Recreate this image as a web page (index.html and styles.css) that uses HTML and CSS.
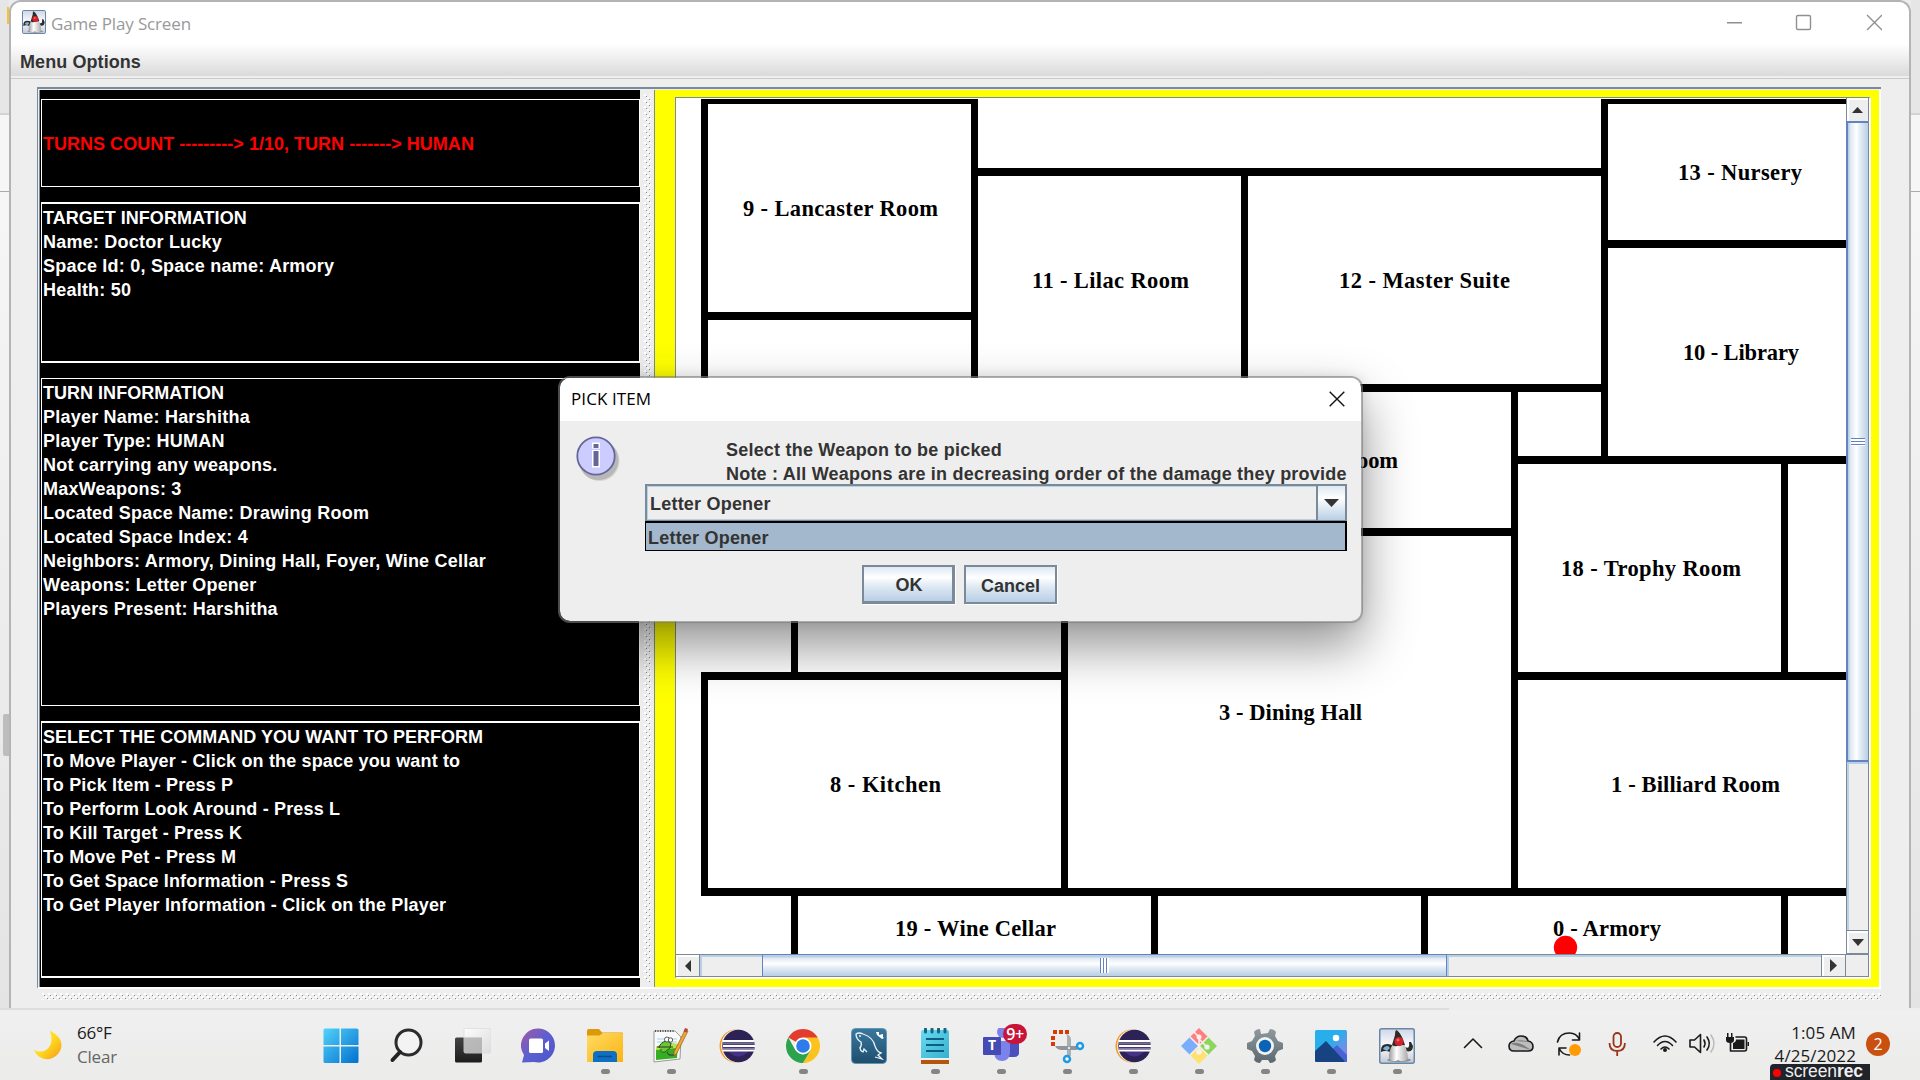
FILE: index.html
```html
<!DOCTYPE html>
<html lang="en">
<head>
<meta charset="utf-8">
<title>Game Play Screen</title>
<link rel="stylesheet" href="styles.css">
</head>
<body>
<svg class="defs" width="0" height="0" aria-hidden="true">
  <defs>
    <linearGradient id="gWin" x1="0" y1="0" x2="1" y2="1"><stop offset="0" stop-color="#52d2fb"/><stop offset="1" stop-color="#0270cd"/></linearGradient>
    <linearGradient id="gDark" x1="0" y1="0" x2="0" y2="1"><stop offset="0" stop-color="#444"/><stop offset="1" stop-color="#1c1c1c"/></linearGradient>
    <linearGradient id="gGlass" x1="0" y1="0" x2="1" y2="1"><stop offset="0" stop-color="#fff" stop-opacity=".95"/><stop offset="1" stop-color="#d8d8d8" stop-opacity=".75"/></linearGradient>
    <linearGradient id="gChat" x1="0" y1="0" x2="1" y2="1"><stop offset="0" stop-color="#a558a5"/><stop offset=".5" stop-color="#5c5fd0"/><stop offset="1" stop-color="#4a55c8"/></linearGradient>
    <linearGradient id="gFolder" x1="0" y1="0" x2="1" y2="1"><stop offset="0" stop-color="#ffdb66"/><stop offset="1" stop-color="#fbb410"/></linearGradient>
    <linearGradient id="gSea" x1="0" y1="0" x2="0" y2="1"><stop offset="0" stop-color="#39789f"/><stop offset="1" stop-color="#1f4d6c"/></linearGradient>
    <linearGradient id="gNote" x1="0" y1="0" x2="1" y2="1"><stop offset="0" stop-color="#6bdcf0"/><stop offset="1" stop-color="#37afd0"/></linearGradient>
    <linearGradient id="gGear" x1="0" y1="0" x2="0" y2="1"><stop offset="0" stop-color="#8f999f"/><stop offset="1" stop-color="#5c6870"/></linearGradient>
    <linearGradient id="gPhoto" x1="0" y1="0" x2="1" y2="1"><stop offset=".4" stop-color="#28aeea"/><stop offset="1" stop-color="#a37be0"/></linearGradient>
    <linearGradient id="gMoon" x1="0" y1="0" x2="1" y2="1"><stop offset="0" stop-color="#ffe84a"/><stop offset=".5" stop-color="#ffd91f"/><stop offset="1" stop-color="#f79a14"/></linearGradient>
    <linearGradient id="gFrame" x1="0" y1="0" x2="0" y2="1"><stop offset="0" stop-color="#cfd6e6"/><stop offset=".5" stop-color="#fbfcff"/><stop offset="1" stop-color="#c3c8d4"/></linearGradient>
    <linearGradient id="gBody" x1="0" y1="0" x2="1" y2="0"><stop offset="0" stop-color="#999"/><stop offset=".4" stop-color="#fff"/><stop offset="1" stop-color="#aaa"/></linearGradient>
    <symbol id="duke" viewBox="0 0 36 36">
      <rect x=".75" y=".75" width="34.5" height="34.5" rx="2" fill="url(#gFrame)" stroke="#6787a5" stroke-width="1.5"/>
      <ellipse cx="20" cy="32" rx="12" ry="2" fill="#8b8f9b"/>
      <path d="M2 22q0-6 6-6 5 0 7 3l-4 5q-5-2-9 0z" fill="#2c2c2c"/>
      <path d="M4 21q1-3 5-3l2 2-3 3z" fill="#7db2dc"/>
      <path d="M26 19q5 3 4-5h2l2 4q0 7-7 5z" fill="#2c2c2c"/>
      <path d="M14 16q-5 8-4 15 4 4 9 1 5 3 10-1 0-8-4-15z" fill="url(#gBody)"/>
      <path d="M17 2q-1 1-1 5l-3 10q3 2 5 1l6-1 2 0-3-8q-3-6-6-7z" fill="#2b2b2b"/>
      <circle cx="20" cy="13.500" r="4.500" fill="#d3202a"/><circle cx="19" cy="12" r="1.500" fill="#f46b62"/>
    </symbol>
    <symbol id="eclipse" viewBox="0 0 36 36">
      <circle cx="17" cy="18" r="16.500" fill="#f7981d"/><circle cx="18.500" cy="18" r="16.500" fill="#f4ede6"/>
      <circle cx="19.500" cy="18" r="16.200" fill="#2c2255"/>
      <path d="M9 23q10 11 21 0z" fill="#453185"/>
      <path d="M4 13.200h31M4 18h32M4 22.500h31" stroke="#fff" stroke-width="2.200"/>
      <path d="M4 15.800h32M4 20.300h32" stroke="#9b90bd" stroke-width="1"/>
    </symbol>
  </defs>
</svg>

<div class="desktop">
  <div class="strip strip-left"><i class="peek-folder"></i><i class="peek-thumb"></i></div>
  <main class="window">
    <header class="titlebar">
      <svg class="app-icon"><use href="#duke"/></svg>
      <span class="title">Game Play Screen</span>
      <svg class="controls" viewBox="0 0 160 42"><g fill="none" stroke="#8f8f8f" stroke-width="1.400"><path d="M5 20.700h15"/><rect x="74.500" y="13.500" width="14" height="14" rx="1.500"/><path d="M145 13l15 15M160 13l-15 15"/></g></svg>
    </header>
    <nav class="menubar"><span>Menu Options</span></nav>
    <div class="content">
      <div class="split">
        <section class="info">
          <div class="box turns"><p class="caps">TURNS COUNT ---------&gt; 1/10, TURN -------&gt; HUMAN</p></div>
          <div class="box target"><p class="caps">TARGET INFORMATION</p><p>Name: Doctor Lucky</p><p>Space Id: 0, Space name: Armory</p><p>Health: 50</p></div>
          <div class="box player"><p class="caps">TURN INFORMATION</p><p>Player Name: Harshitha</p><p>Player Type: HUMAN</p><p>Not carrying any weapons.</p><p>MaxWeapons: 3</p><p>Located Space Name: Drawing Room</p><p>Located Space Index: 4</p><p>Neighbors: Armory, Dining Hall, Foyer, Wine Cellar</p><p>Weapons: Letter Opener</p><p>Players Present: Harshitha</p></div>
          <div class="box commands"><p class="caps">SELECT THE COMMAND YOU WANT TO PERFORM</p><p>To Move Player - Click on the space you want to</p><p>To Pick Item - Press P</p><p>To Perform Look Around - Press L</p><p>To Kill Target - Press K</p><p>To Move Pet - Press M</p><p>To Get Space Information - Press S</p><p>To Get Player Information - Click on the Player</p></div>
        </section>
        <div class="divider"></div>
        <section class="board">
          <div class="scrollpane">
            <svg class="map" viewBox="677 99 1169 855">
              <rect x="677" y="99" width="1169" height="855" fill="#fff"/>
              <g fill="#000">
                <rect x="701" y="99" width="277" height="5"/><rect x="701" y="99" width="7" height="430"/><rect x="971" y="99" width="7" height="430"/>
                <rect x="701" y="312" width="277" height="8"/><rect x="971" y="168" width="637" height="8"/>
                <rect x="1241" y="168" width="7" height="224"/><rect x="1601" y="99" width="7" height="365"/>
                <rect x="1601" y="99" width="245" height="5"/><rect x="1601" y="240" width="245" height="8"/>
                <rect x="971" y="384" width="637" height="8"/><rect x="1511" y="384" width="7" height="512"/>
                <rect x="1511" y="456" width="335" height="8"/><rect x="1061" y="528" width="457" height="8"/>
                <rect x="1511" y="672" width="335" height="8"/><rect x="1781" y="456" width="7" height="224"/>
                <rect x="791" y="528" width="7" height="152"/><rect x="1061" y="528" width="7" height="368"/>
                <rect x="701" y="672" width="367" height="8"/><rect x="701" y="672" width="7" height="224"/>
                <rect x="701" y="888" width="1145" height="8"/>
                <rect x="791" y="888" width="7" height="66"/><rect x="1151" y="888" width="7" height="66"/><rect x="1421" y="888" width="7" height="66"/><rect x="1781" y="888" width="7" height="66"/>
              </g>
              <g class="rooms">
                <text x="743" y="216" textLength="195">9 - Lancaster Room</text>
                <text x="1032" y="288" textLength="157">11 - Lilac Room</text>
                <text x="1339" y="288" textLength="171">12 - Master Suite</text>
                <text x="1678" y="180" textLength="124">13 - Nursery</text>
                <text x="1683" y="360" textLength="116">10 - Library</text>
                <text x="1341" y="468" textLength="57">Room</text>
                <text x="1561" y="576" textLength="180">18 - Trophy Room</text>
                <text x="1219" y="720" textLength="143">3 - Dining Hall</text>
                <text x="830" y="792" textLength="111">8 - Kitchen</text>
                <text x="1611" y="792" textLength="169">1 - Billiard Room</text>
                <text x="895" y="936" textLength="161">19 - Wine Cellar</text>
                <text x="1553" y="936" textLength="108">0 - Armory</text>
              </g>
              <circle cx="1565.500" cy="947.500" r="11.700" fill="#f00"/>
            </svg>
            <div class="vbar">
              <span class="arrow up"><svg width="11" height="6"><path d="M0 6L5.500 0 11 6z" fill="#333"/></svg></span>
              <div class="vthumb"><i></i></div>
              <div class="vtrack"></div>
              <span class="arrow down"><svg width="12" height="7"><path d="M0 0h12L6 7z" fill="#333"/></svg></span>
            </div>
            <div class="hbar">
              <span class="arrow left"><svg width="6" height="12"><path d="M6 0v12L0 6z" fill="#333"/></svg></span>
              <div class="htrack before"></div>
              <div class="hthumb"><i></i></div>
              <div class="htrack after"></div>
              <span class="arrow right"><svg width="7" height="13"><path d="M0 0v13L7 6.500z" fill="#333"/></svg></span>
            </div>
            <div class="corner"></div>
          </div>
        </section>
      </div>
      <div class="hdivider"></div>
    </div>
  </main>
  <div class="strip strip-right"></div>
</div>

<section class="dialog">
  <header class="dialog-title"><span>PICK ITEM</span><svg width="16" height="16" viewBox="0 0 16 16"><path d="M.7.700l14.600 14.600M15.300.700L.7 15.300" stroke="#111" stroke-width="1.400"/></svg></header>
  <div class="dialog-body">
    <svg class="info-icon" viewBox="0 0 48 48"><circle cx="23.500" cy="25" r="20" fill="#000" opacity=".1"/><circle cx="22.500" cy="24" r="20" fill="#000" opacity=".14"/><circle cx="20" cy="20" r="18.700" fill="#ccccff" stroke="#666699" stroke-width="1.800"/><path d="M16 6.500h8v6h-8zM16 14h8v17.500h-8z" fill="#fff"/><path d="M17.500 8h5v4h-5zM17.500 15h5v15h-5z" fill="#666699"/></svg>
    <div class="form">
      <div class="message"><p class="m1">Select the Weapon to be picked</p><p class="m2">Note : All Weapons are in decreasing order of the damage they provide</p></div>
      <div class="combo"><span>Letter Opener</span><b><svg width="15" height="8"><path d="M0 0h15L7.500 8z" fill="#333"/></svg></b></div>
      <div class="option">Letter Opener</div>
    </div>
  </div>
  <div class="buttons"><button class="ok">OK</button><button>Cancel</button></div>
</section>

<footer class="taskbar">
  <div class="weather">
    <svg width="30" height="32" viewBox="0 0 30 32"><path d="M17 1C29 6 32 17 24 25C17 32 5 30 1 20C9 24 16 20 18 13C19 8 18 4 17 1z" fill="url(#gMoon)"/></svg>
    <div><p>66°F</p><p class="dim">Clear</p></div>
  </div>
  <div class="apps">
    <span class="app"><svg viewBox="0 0 36 36"><path d="M.5 2Q.5.500 2 .5h14.500v16.500H.5zM18 .5h15.500Q35.500.500 35.500 2v15H18zM.5 18.500h16v16.500H2q-1.500 0-1.500-1.500zM18 18.500h17.500v15q0 1.500-1.500 1.500H18z" fill="url(#gWin)"/></svg></span>
    <span class="app"><svg viewBox="0 0 36 36"><circle cx="19.500" cy="14.500" r="12.500" fill="#f3f3f3" stroke="#2c2c2c" stroke-width="3"/><path d="M11 24L3.500 32" stroke="#222" stroke-width="4" stroke-linecap="round"/></svg></span>
    <span class="app"><svg viewBox="0 0 36 36"><rect y="9.500" width="27" height="25" rx="1.500" fill="url(#gDark)"/><rect x="9" y=".5" width="27" height="24.500" rx="1.500" fill="url(#gGlass)" stroke="#ddd" stroke-width=".8"/><path d="M9 9.500h18v15.500H9z" fill="#b4b4b4" opacity=".85"/></svg></span>
    <span class="app"><svg viewBox="0 0 36 36"><path d="M18 .5A17 17 0 1 1 13 34L1 34.500 3 27A17 17 0 0 1 18 .5z" fill="url(#gChat)"/><rect x="8" y="10.500" width="14" height="14.500" rx="1.500" fill="#fff"/><path d="M24 15.500l4-3v10.500l-4-3z" fill="#fff"/></svg></span>
    <span class="app run"><svg viewBox="0 0 36 36"><path d="M0 3Q0 1 2 1h10l3 3.500h19.500q1.500 0 1.500 1V12H0z" fill="#dc9a09"/><path d="M0 7.500h12.500L16 5h18.500Q36 5 36 6.500V34H0z" fill="url(#gFolder)"/><path d="M6 34V27q0-4 4-4h16q4 0 4 4v7z" fill="#0f6fc2"/><path d="M10.500 28.500h14.500" stroke="#074d8c" stroke-width="1.500"/></svg></span>
    <span class="app run"><svg viewBox="0 0 36 36"><path d="M1 3l21 0 6 6-1 22-26 3z" fill="#fafafa" stroke="#9a9a9a"/><path d="M2 3h20" stroke="#555" stroke-width="2" stroke-dasharray="1 1.500"/><path d="M4 11h20M4 14h20" stroke="#a8cfe8"/><path d="M3 19q10-5 22-3l-1 14-21 2z" fill="#37ad26"/><path d="M3 19q10-4 22-3l-1 4-21 2z" fill="#bde348"/><path d="M6 20q1-6 8-7l4 2-1 5-5 4q-5 1-4-3" fill="#6cc832" stroke="#225d19"/><circle cx="14" cy="11.500" r="2.500" fill="#fff" stroke="#333" stroke-width=".8"/><circle cx="17.500" cy="12" r="2.200" fill="#fff" stroke="#333" stroke-width=".8"/><path d="M4 19h16M14 24l2 3h5" stroke="#333" fill="none"/><path d="M32 2l3 1-11 22-3 3 0-4z" fill="#f1a82f" stroke="#8a5d1e" stroke-width=".7"/><path d="M32 0l3 1-1.500 3.500-3-1z" fill="#b7463f"/></svg></span>
    <span class="app"><svg><use href="#eclipse"/></svg></span>
    <span class="app run"><svg viewBox="0 0 36 36"><path d="M18 18L3.300 9.500A17 17 0 0 1 32.700 9.500z" fill="#e33b2e"/><path d="M18 9.500h14.700A17 17 0 0 1 18 35l7.400-12.500z" fill="#fcc31e"/><path d="M3.300 9.500A17 17 0 0 0 18 35l7.400-12.500-7.400 4-7.400-4z" fill="#2ba24c"/><circle cx="18" cy="18" r="8.500" fill="#fff"/><circle cx="18" cy="18" r="6.800" fill="#2f7bea"/></svg></span>
    <span class="app"><svg viewBox="0 0 36 36"><rect x=".5" y=".5" width="35" height="35" rx="4" fill="url(#gSea)" stroke="#6495b3"/><g fill="none" stroke="#e9f3f8" stroke-width="1.300"><path d="M9 20q2-2 1-6Q5 11 5 6q3-2 7 0q10 3 12 12q2 6 6 7l-3 2 4 4-7-2"/><path d="M9 19q0 4 3 5l1-3 3 3"/></g><path d="M25 4l3 0 0 3 4-1 0 3 1 1-2 1-5-4z" fill="#fff"/><circle cx="9" cy="8" r=".9" fill="#fff"/></svg></span>
    <span class="app run"><svg viewBox="0 0 36 36"><path d="M4 31h28v5H4z" fill="#b3560f"/><path d="M4 29h28v3H4z" fill="#f1f1ef"/><path d="M4 4q0-2 2-2h24q2 0 2 2v26H4z" fill="url(#gNote)"/><path d="M8.500 1v3M15 1v3M21.500 1v3M28 1v3" stroke="#146784" stroke-width="3" stroke-linecap="round"/><path d="M9 11h18M9 17h18M9 23h18" stroke="#0c5f83" stroke-width="1.800"/></svg></span>
    <span class="app run teams"><svg viewBox="0 0 36 36"><path d="M26 12h10v14q-1 3-5 3h-5z" fill="#4b50bd"/><circle cx="20" cy="4" r="6" fill="#7b83eb"/><path d="M11 13h16v12q-1 8-8 8t-8-8z" fill="#7b83eb"/><rect x="0" y="9" width="18" height="18" rx="1" fill="#444cb4"/></svg><em>T</em><b>9+</b></span>
    <span class="app run"><svg viewBox="0 0 36 36"><path d="M4 4h4M10 4h4M16 4h4M4 8v4M4 14v4" stroke="#d83b01" stroke-width="4"/><path d="M17 6q5 1 5 6v16h-4V8z" fill="#a9b0b4"/><path d="M6 18h22v4H13q-5 0-7-4z" fill="#8e969b"/><circle cx="20" cy="20" r="1.200" fill="#e8eaeb"/><circle cx="31" cy="18" r="3" fill="#fff" stroke="#1c9be2" stroke-width="2.500"/><circle cx="18" cy="31" r="3" fill="#fff" stroke="#1c9be2" stroke-width="2.500"/></svg></span>
    <span class="app run"><svg><use href="#eclipse"/></svg></span>
    <span class="app run"><svg viewBox="0 0 36 36"><path d="M18 0l9 9-9 9-9-9z" fill="#ff7f7f"/><path d="M27 9l9 9-9 9-9-9z" fill="#8bd65c"/><path d="M9 9l9 9-9 9-9-9z" fill="#7badff"/><path d="M18 18l9 9-9 9-9-9z" fill="#ffe16e"/><path d="M13 4l5 5v15M18 11l8 8M9 9l18 18M27 9L9 27" stroke="#f4f2ef" stroke-width="1.600" fill="none"/><circle cx="18" cy="9" r="2.500" fill="#f4f2ef"/><circle cx="18" cy="24" r="2.800" fill="#f4f2ef"/><circle cx="26" cy="19" r="2.600" fill="#f4f2ef"/></svg></span>
    <span class="app run"><svg viewBox="0 0 36 36"><path d="M14 6l-1-5q-4 0-6 3l1 4-3 5-5 2q-1 3 0 6l5 2 3 5-1 4q2 3 6 3l2-3h6l2 3q4 0 6-3l-1-4 3-5 5-2q1-3 0-6l-5-2-3-5 1-4q-2-3-6-3l-2 4z" fill="url(#gGear)"/><circle cx="18" cy="18" r="9" fill="#f1f2f3"/><circle cx="18" cy="18" r="6.200" fill="#0c62b5"/></svg></span>
    <span class="app run"><svg viewBox="0 0 36 36"><rect x="2" y="2" width="32" height="32" rx="1.500" fill="url(#gPhoto)"/><path d="M16 24l8-7 10 10v7H16z" fill="#4a63d4"/><path d="M2 23l11-10 18 19.500q1 1.500-1 1.500H3.500Q2 34 2 32.500z" fill="#174383"/><circle cx="23" cy="10" r="3.200" fill="#fff"/></svg></span>
    <span class="app run"><svg><use href="#duke"/></svg></span>
  </div>
  <svg class="tray" viewBox="1460 1025 295 38">
    <g fill="none" stroke="#1a1a1a" stroke-width="1.600" stroke-linecap="round" stroke-linejoin="round">
      <path d="M1464.500 1047.500l8.500-8.500 8.500 8.500"/>
      <path d="M1514 1051q-5 0-5-5 0-4 5-5 2-5 7-5 6 0 7 5 5 1 5 5.500t-5 4.500z" fill="#bdbdbd"/>
      <path d="M1511 1044q7-4 20 6M1515 1041q7-2 14 1" stroke="none" fill="#808080"/>
      <path d="M1557.500 1042q2-9 12-9 7 0 10 6.500M1579.500 1033v7h-7M1559 1055v-7h7M1559.500 1049q3 6 10 6"/>
      <path d="M1654 1042q11-12 22 0M1657.500 1045.500q7.500-8 15 0M1661 1049q4-4 8 0"/>
      <path d="M1690 1040h4.500l6-5.500v18l-6-5.500h-4.500zM1704 1040q2 3.500 0 7M1707 1037q4.500 6.500 0 13"/>
      <path d="M1711 1035q6 8.500 0 17" stroke="#bbb"/>
      <path d="M1736 1037h8.500q2 0 2 2v10q0 2-2 2h-14v-9"/>
    </g>
    <circle cx="1575" cy="1050" r="6" fill="#ff9b05"/>
    <circle cx="1665" cy="1050" r="2" fill="#1a1a1a"/>
    <path d="M1736 1039.500h8.500v9.500H1733v-6q3-1 3-3.500zM1747.500 1042h1.500v4h-1.500zM1726 1037h8v3q0 3-4 3t-4-3zM1727 1033h1.500v4h-1.500zM1731 1033h1.500v4h-1.500z" fill="#1a1a1a"/>
    <g fill="none" stroke="#9c3418" stroke-width="1.800"><rect x="1613.500" y="1033" width="7.500" height="14" rx="3.700"/><path d="M1609.500 1043q0 8 7.700 8t7.700-8M1617.200 1051v5"/></g>
  </svg>
  <div class="clock"><p>1:05 AM</p><p class="date">4/25/2022</p></div>
  <span class="badge">2</span>
  <div class="recorder"><i></i><span>screen<b>rec</b></span></div>
</footer>
</body>
</html>
```

FILE: styles.css
```css
* { box-sizing: border-box; }
body { margin: 0; width: 1920px; height: 1080px; overflow: hidden; position: relative; display: flex; flex-direction: column; background: #ededed; font-family: "Liberation Sans", Arial, sans-serif; }
p { margin: 0; }
svg { display: block; flex: none; }
.defs { position: absolute; }

.desktop { height: 1008px; display: flex; flex: none; }
.strip { width: 9px; flex: none; background: linear-gradient(#e6e6e6 113px, #d2d2d2 113px, #d2d2d2 115px, #f6f6f6 115px, #f6f6f6 191px, #aaa 191px, #aaa 192px, #f6f6f6 192px, #e4e4e4 100%); }
.strip-left { position: relative; }
.peek-folder { position: absolute; left: 7px; top: 7px; width: 2px; height: 17px; background: #f3c33c; }
.peek-thumb { position: absolute; left: 3px; top: 714px; width: 6px; height: 42px; background: #bdbdbd; border-radius: 2px 0 0 2px; }
.window { width: 1902px; flex: none; border: 2px solid #b4b4b4; border-bottom: 0; border-radius: 12px 12px 0 0; background: #eee; overflow: hidden; }

.titlebar { height: 42px; background: #fff; display: flex; align-items: flex-start; padding-left: 11px; }
.app-icon { width: 24px; height: 24px; margin-top: 8px; }
.title { font: 17px/24px "Open Sans", sans-serif; color: #999; margin: 10px 0 0 5px; letter-spacing: -.15px; flex: 1; }
.controls { width: 160px; height: 42px; margin-right: 27px; }
.menubar { height: 35px; border-bottom: 1px solid #ccc; background: linear-gradient(#fff, #dadada 32px, #eee 32px); padding: 6px 9px 0; font: bold 18px/24px "Liberation Sans", Arial, sans-serif; letter-spacing: .08px; color: #333; }

.content { padding: 8px 28px 0 26px; }
.split { height: 902px; display: flex; border-top: 2px solid #7a8a99; border-left: 1px solid #7a8a99; border-bottom: 2px solid #fff; padding-top: 1px; }
.info { width: 601px; margin-left: 1px; border-left: 1px solid #7a8a99; background: #000; color: #fff; padding: 9px 0 0 1px; font: bold 18px/24px "Liberation Sans", Arial, sans-serif; letter-spacing: .22px; white-space: nowrap; height: 897px; flex: none; }
.box { border: 1px solid #fff; padding: 2px 0 0 1px; }
.turns { height: 88px; margin-bottom: 15px; display: flex; align-items: center; color: #f00; }
.target { height: 161px; margin-bottom: 15px; border-width: 2px 1px; }
.player { height: 328px; margin-bottom: 15px; }
.commands { height: 257px; border-width: 2px 1px; letter-spacing: .16px; }
.caps { letter-spacing: .02px; }
.divider { width: 14px; flex: none; background: #eee; }
.divider::after, .hdivider { content: ""; display: block; background: radial-gradient(circle at 1px 1px, #fff 1px, transparent 1.2px) 0 0 / 6px 6px, radial-gradient(circle at 1px 1px, #fff 1px, transparent 1.2px) 3px 3px / 6px 6px, conic-gradient(from 270deg at 1px 1px, #7a8a99 90deg, transparent 90deg) 2px 2px / 6px 6px, conic-gradient(from 270deg at 1px 1px, #7a8a99 90deg, transparent 90deg) 5px 5px / 6px 6px; }
.divider::after { width: 7px; height: 888px; margin: 4px 0 0 4px; }
.hdivider { height: 7px; margin: 4px 0 0 5px; }
.board { flex: 1; background: #ff0; border-left: 1px solid #7a8a99; border-right: 2px solid #fff; padding: 7px 8px 8px 20px; height: 897px; }
.scrollpane { height: 882px; border: solid #7a8a99; border-width: 1px 0 0 1px; border-right: 2px solid #fff; border-bottom: 2px solid #fff; display: grid; grid-template: 856px 23px / 1170px 1fr; background: #fff; }
.map { width: 1169px; height: 855px; margin: 1px 0 0 1px; }
.rooms { font: bold 22.5px "Liberation Serif", "Times New Roman", serif; fill: #000; }
.vbar { display: flex; flex-direction: column; border-left: 1px solid #7a8a99; border-right: 1px solid #7a8a99; }
.arrow { display: flex; align-items: center; justify-content: center; background: #eee; border: 0 solid #7a8a99; flex: none; }
.up { height: 23px; box-shadow: inset 2px 2px #fff; }
.vthumb { height: 641px; border: 2px solid #6382bf; border-width: 2px 0 2px 2px; margin-left: -1px; background: linear-gradient(90deg, #b8cfe5 1px, #dce7f2 2px, #fff 42%, #e4edf5 60%, #b8cfe5); display: flex; align-items: center; justify-content: center; }
.vthumb i { width: 14px; height: 8px; background: repeating-linear-gradient(#6382bf 0 1px, #fff 1px 3px); }
.vtrack, .htrack { flex: 1; background: #eee; box-shadow: inset 2px 2px #b8cfe5; }
.down { height: 24px; border-width: 1px 0; box-shadow: inset 2px 2px #fff; }
.hbar { display: flex; border: 1px solid #7a8a99; border-left: 0; }
.left { width: 24px; border-right-width: 1px; box-shadow: inset 2px 2px #fff; }
.before { flex: 0 0 62px; }
.hthumb { width: 685px; border: solid #6382bf; border-width: 0 1px; margin-top: -1px; border-top: 1px solid #6382bf; background: linear-gradient(#b8cfe5 2px, #dfe9f3 3px, #fff 42%, #e4edf5 60%, #b8cfe5); display: flex; align-items: center; justify-content: center; }
.hthumb i { width: 9px; height: 15px; background: repeating-linear-gradient(90deg, #6382bf 0 1px, #fff 1px 3px); }
.right { width: 24px; border-left-width: 1px; box-shadow: inset 2px 2px #fff; }
.corner { background: #eee; border: solid #7a8a99; border-width: 1px 1px 1px 0; }

.dialog { position: absolute; left: 558px; top: 376px; width: 805px; height: 247px; border: 2px solid rgba(125, 125, 125, .62); background: #eee; background-clip: padding-box; border-radius: 12px; box-shadow: 0 24px 52px rgba(0, 0, 0, .42), 0 0 12px rgba(0, 0, 0, .1); color: #333; font: bold 18px/24px "Liberation Sans", Arial, sans-serif; letter-spacing: .21px; overflow: hidden; }
.dialog-title { height: 43px; background: #fff; display: flex; justify-content: space-between; padding: 9px 16px 0 11px; font: 17px/24px "Open Sans", sans-serif; letter-spacing: .1px; color: #000; }
.dialog-title svg { margin-top: 4px; }
.dialog-body { display: flex; padding: 15px 0 0 16px; }
.info-icon { width: 48px; height: 48px; }
.form { margin: 2px 0 0 21px; width: 702px; white-space: nowrap; }
.message { padding-left: 81px; height: 46px; }
.combo { height: 37px; width: 702px; border: 2px solid #7a8a99; border-bottom-width: 1px; display: flex; box-shadow: inset 0 0 0 1px #b8cfe5; }
.combo span { flex: 1; padding: 6px 3px 0; }
.combo b { width: 29px; border-left: 2px solid #7a8a99; background: linear-gradient(#dde8f3, #fff 35%, #b8cfe5); display: flex; align-items: center; justify-content: center; }
.option { height: 30px; border: 2px solid #000; border-width: 2px 2px 1px 1px; background: #a3b8cc; padding: 3px 2px; }
.buttons { display: flex; gap: 9px; padding: 14px 0 0 302px; }
.buttons button { width: 93px; height: 39px; padding: 2px 0 0; border: 2px solid #7a8a99; background: linear-gradient(#dde8f3, #fff 30%, #dce7f2 60%, #b8cfe5); font: bold 18px/24px "Liberation Sans", Arial, sans-serif; color: #333; box-shadow: 1px 1px #fff; }
.buttons .ok { border-width: 2px 3px 3px 2px; padding-left: 2px; outline: 1px solid #7a8a99; outline-offset: -1px; }

.taskbar { height: 72px; flex: none; display: flex; position: relative; background: linear-gradient(90deg, #ddd 1449px, #eee 1449px) 0 0 / 100% 2px no-repeat, linear-gradient(#f0f0f0, #ebebea); font-family: "Open Sans", sans-serif; color: #1a1a1a; }
.weather { width: 308px; flex: none; display: flex; padding: 13px 0 0 33px; gap: 14px; font-size: 17px; line-height: 24px; letter-spacing: -.2px; }
.weather svg { margin-top: 9px; }
.weather .dim { color: #666; }
.apps { display: flex; width: 1122px; flex: none; }
.app { width: 66px; padding: 20px 0 0 15px; position: relative; flex: none; }
.app svg { width: 36px; height: 36px; }
.app.run::after { content: ""; display: block; width: 9px; height: 5px; border-radius: 3px; background: #858585; margin: 5px 0 0 14px; }
.teams em { position: absolute; left: 20px; top: 28px; font: bold 14px/18px "Open Sans", sans-serif; color: #fff; }
.teams b { position: absolute; left: 35px; top: 16px; width: 24px; height: 20px; border-radius: 10px; background: #c9143a; color: #fff; font: 600 16px/20px "Open Sans", sans-serif; text-align: center; letter-spacing: -.5px; }
.tray { width: 295px; height: 38px; margin: 17px 0 0 30px; }
.clock { width: 101px; padding-top: 13px; text-align: right; font-size: 17px; line-height: 23px; letter-spacing: .1px; }
.badge { width: 24px; height: 24px; border-radius: 50%; background: #ca5010; color: #fff; font-size: 16px; line-height: 24px; text-align: center; margin: 24px 0 0 10px; }
.recorder { position: absolute; left: 1770px; top: 56px; width: 100px; height: 16px; background: #202329; color: #eee; display: flex; font: 17.5px/16px "Liberation Sans", Arial, sans-serif; letter-spacing: -.1px; border-radius: 4px 0 0 0; }
.recorder i { width: 8px; height: 8px; border-radius: 50%; background: #f00; margin: 5px 4px 0 3px; flex: none; }
.recorder span { height: 16px; margin-top: -1px; }
```
